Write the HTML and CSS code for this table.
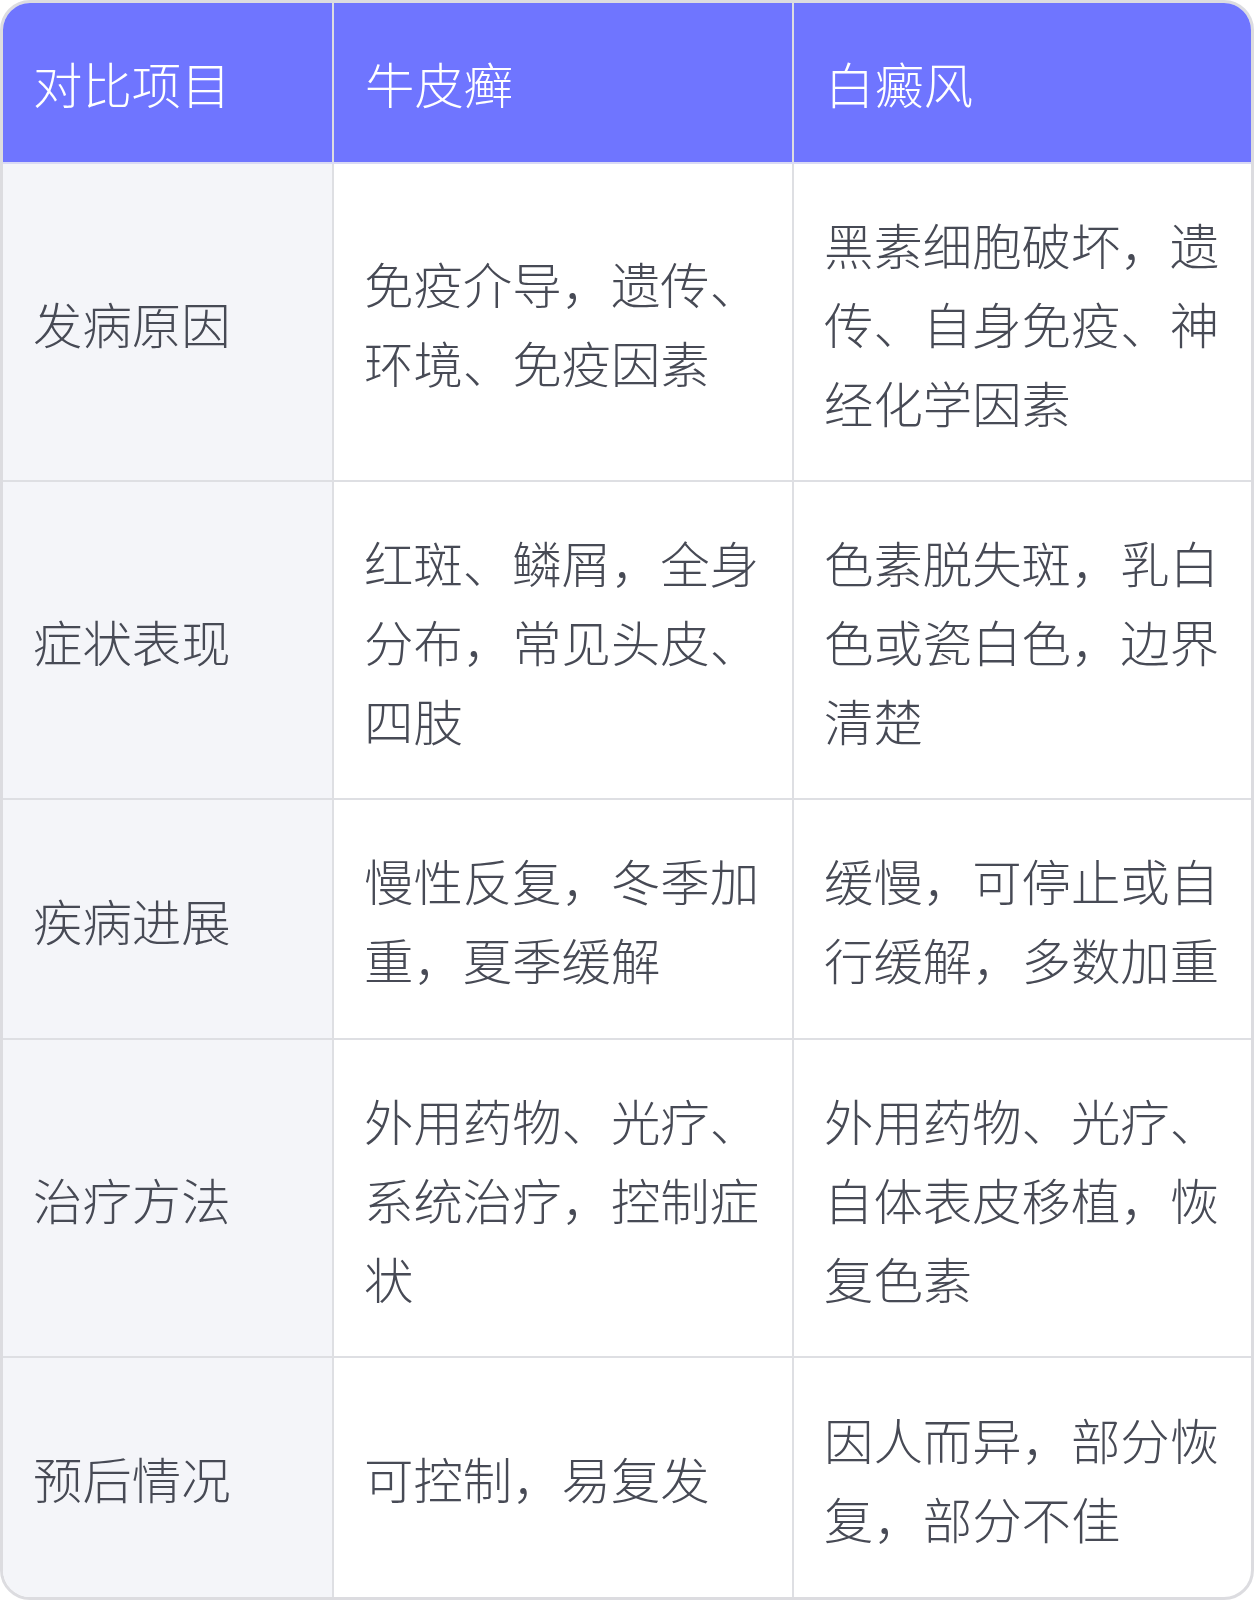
FILE: index.html
```html
<!DOCTYPE html>
<html lang="zh-CN">
<head>
<meta charset="utf-8">
<link rel="stylesheet" href="styles.css">
</head>
<body>
<div class="wrap">
<table class="cmp">
<colgroup><col class="c1"><col class="c2"><col class="c3"></colgroup>
<thead>
<tr><th>对比项目</th><th>牛皮癣</th><th>白癜风</th></tr>
</thead>
<tbody>
<tr class="r3"><td>发病原因</td><td>免疫介导，遗传、环境、免疫因素</td><td>黑素细胞破坏，遗传、自身免疫、神经化学因素</td></tr>
<tr class="r3"><td>症状表现</td><td>红斑、鳞屑，全身分布，常见头皮、四肢</td><td>色素脱失斑，乳白色或瓷白色，边界清楚</td></tr>
<tr><td>疾病进展</td><td>慢性反复，冬季加重，夏季缓解</td><td>缓慢，可停止或自行缓解，多数加重</td></tr>
<tr class="r3"><td>治疗方法</td><td>外用药物、光疗、系统治疗，控制症状</td><td>外用药物、光疗、自体表皮移植，恢复色素</td></tr>
<tr><td>预后情况</td><td>可控制，易复发</td><td>因人而异，部分恢复，部分不佳</td></tr>
</tbody>
</table>
</div>
</body>
</html>
```
FILE: styles.css
```css
html, body {
  margin: 0;
  padding: 0;
  background: #ffffff;
}
.wrap {
  width: 1254px;
  height: 1600px;
  box-sizing: border-box;
  border: 3px solid #dcdce0;
  border-radius: 30px;
  overflow: hidden;
  background: #ffffff;
}
.cmp {
  width: 100%;
  border-collapse: collapse;
  table-layout: fixed;
  font-family: "Noto Sans CJK SC", "Noto Sans", sans-serif;
  font-size: 49.4px;
  font-weight: 200;
  line-height: 79px;
}
.c1 { width: 330px; }
.c2 { width: 460px; }
.c3 { width: auto; }
.cmp th {
  background: #6f75ff;
  color: #ffffff;
  font-weight: 200;
  text-align: left;
  padding: 40px 30px 40px 31px;
  height: 79px;
  border-left: 2px solid #dcdce0;
  border-bottom: 2px solid #d9daf5;
}
.cmp th:first-child { border-left: none; padding-left: 30px; }
.cmp td {
  color: #474a55;
  padding: 38px 28px 38px 30px;
  vertical-align: middle;
  border-left: 2px solid #dedfe3;
  border-top: 2px solid #dedfe3;
}
.cmp td:first-child {
  border-left: none;
  background: #f4f5f9;
}
.cmp tbody tr { height: 240px; }
.cmp tbody tr.r3 { height: 318px; }
```
